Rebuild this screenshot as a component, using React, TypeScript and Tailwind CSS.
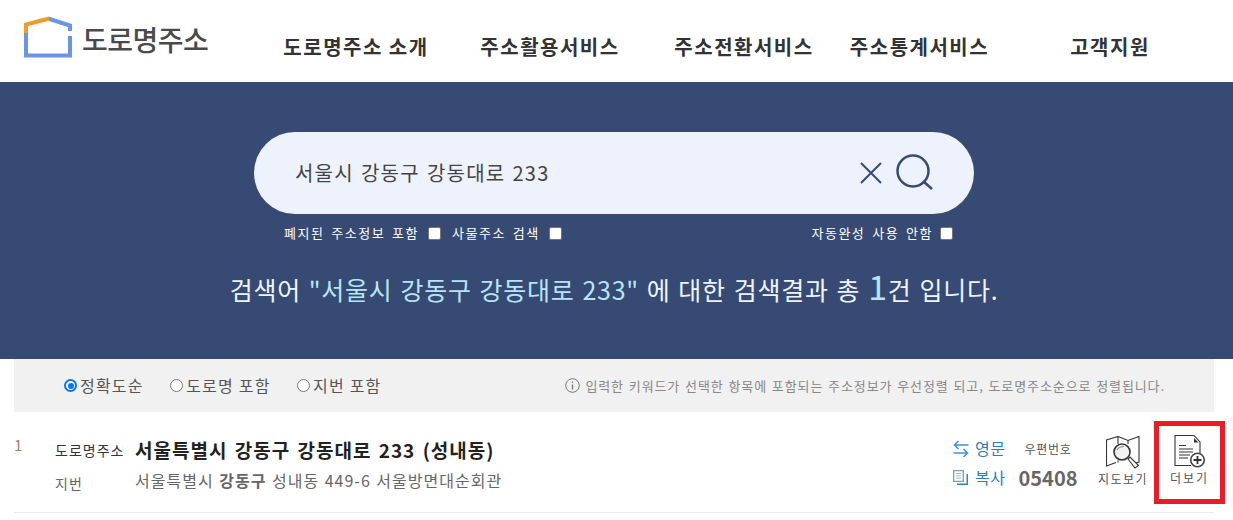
const FONT = "font-['Noto_Sans_CJK_KR','Noto_Sans',sans-serif]";

function Logo() {
  return (
    <svg width="48" height="42" viewBox="0 0 48 42" className="block">
      <path d="M2 17V39.500H46V20M46 15V9.500L24 2.500" fill="none" stroke="#6a94e4" strokeWidth="4" />
      <path d="M2 17V8.500L25 2.500" fill="none" stroke="#f39c25" strokeWidth="4" />
    </svg>
  );
}

function Box() {
  return <span className="inline-block w-[13px] h-[13px] bg-white border border-[#767676] rounded-[2px] shrink-0" />;
}

function Radio({ on, label }: { on?: boolean; label: string }) {
  return (
    <span className="flex items-center">
      <span className={`w-[13px] h-[13px] rounded-full bg-white shrink-0 mt-[2px] ${on ? "border-2 border-[#0075ff] p-[1.500px]" : "border border-[#767676]"}`}>
        {on && <span className="block w-full h-full rounded-full bg-[#0075ff]" />}
      </span>
      <span className="ml-[3px] text-[16px] leading-5 tracking-[1.200px] text-[#555]">{label}</span>
    </span>
  );
}

function MapIcon() {
  return (
    <svg width="34" height="33" viewBox="0 0 34 33" fill="none" stroke="#333" strokeWidth="1.100">
      <path d="M10 26.500L0.500 30V4L12 0.500L22 4.500L33 0.500V26L27 28" />
      <path d="M12 0.500V8M22 4.500V8M12 24.500V26.500" />
      <path d="M22 23L29 32L32.500 29.500L24 21Z" fill="#fff" />
      <circle cx="16" cy="16" r="8" fill="#f2f2f2" strokeWidth="1.600" />
      <path d="M11 14Q13 10.500 18 10.500" stroke="#888" />
    </svg>
  );
}

function DocIcon() {
  return (
    <svg width="32" height="34" viewBox="0 0 32 34" fill="none" stroke="#333" strokeWidth="1.100">
      <path d="M17 30.500H1V0.500H20L26 7V19" />
      <path d="M20 3V7.500H24.500Z" fill="#333" stroke="none" />
      <path d="M5 10.500H12M5 14H19M5 17H19M5 20H16M5 23H14" />
      <circle cx="23.500" cy="25" r="6.800" fill="#fff" strokeWidth="1.600" stroke="#444" />
      <path d="M23.500 21V29M19.500 25H27.500" strokeWidth="1.800" />
    </svg>
  );
}

export default function App() {
  const navItems = [
    ["도로명주소 소개", "w-[194px]"],
    ["주소활용서비스", "w-[194px]"],
    ["주소전환서비스", "w-[194px]"],
    ["주소통계서비스", "w-[157px]"],
    ["고객지원", "w-[224px]"],
  ];
  return (
    <div className={`${FONT} w-[1233px] h-[520px] bg-white overflow-hidden relative`}>
      <header className="h-[82px] flex">
        <div className="w-[259px] pl-[24px] pt-[16px] flex items-start">
          <Logo />
          <span className="ml-[10px] mt-[3px] text-[28px] leading-[40px] font-medium text-[#4a4a4a] tracking-[-0.500px]">도로명주소</span>
        </div>
        <nav className="flex pt-[33px]">
          {navItems.map(([label, w]) => (
            <span key={label} className={`${w} text-center text-[20px] leading-[28px] tracking-[1.500px] font-bold text-[#333]`}>{label}</span>
          ))}
        </nav>
      </header>

      <section className="h-[277px] bg-[#374a74] flex flex-col items-center pt-[50px] pr-[5px]">
        <div className="w-[720px] h-[82px] rounded-[41px] bg-[#edf2fc] flex items-center pl-[41px] pr-[40px]">
          <span className="flex-1 text-[20px] tracking-[1.200px] [word-spacing:1.500px] text-[#444]">서울시 강동구 강동대로 233</span>
          <svg width="24" height="24" viewBox="0 0 24 24" fill="none" stroke="#374a74" strokeWidth="2" className="mr-[13px]">
            <path d="M2 2L22 22M22 2L2 22" />
          </svg>
          <svg width="38" height="38" viewBox="0 0 38 38" fill="none" stroke="#374a74" strokeWidth="2.500">
            <circle cx="17" cy="17" r="15.500" />
            <path d="M27 27L36 35" />
          </svg>
        </div>
        <div className="w-[720px] h-[38px] flex items-center text-[13px] tracking-[1.500px] [word-spacing:2.500px] text-white">
          <span className="ml-[30px] w-[144px]">폐지된 주소정보 포함</span>
          <Box />
          <span className="ml-[11px] w-[97px]">사물주소 검색</span>
          <Box />
          <span className="ml-auto">자동완성 사용 안함</span>
          <span className="ml-[7px] mr-[21px] flex"><Box /></span>
        </div>
        <p className="mt-[16px] text-[25px] leading-[36px] tracking-[0.750px] [word-spacing:1.500px] text-[#eef4ff] flex items-baseline">
          <span>검색어&nbsp;</span>
          <span className="text-[#b5e6f7]">"서울시 강동구 강동대로 233"</span>
          <span>&nbsp;에 대한 검색결과 총&nbsp;</span>
          <span className="text-[34px] leading-[36px] text-[#b5e6f7]">1</span>
          <span>건 입니다.</span>
        </p>
      </section>

      <div className="mx-[14px] w-[1200px] h-[53px] bg-[#f1f1f1] flex items-center pl-[50px] pr-[49px]">
        <div className="flex gap-[26.500px] -mt-[2px]">
          <Radio on label="정확도순" />
          <Radio label="도로명 포함" />
          <Radio label="지번 포함" />
        </div>
        <div className="ml-auto flex items-center text-[13px] tracking-[0.900px] [word-spacing:1px] text-[#888]">
          <svg width="15" height="15" viewBox="0 0 15 15" fill="none" stroke="#777" className="mr-[5px]">
            <circle cx="7.500" cy="7.500" r="6.800" />
            <path d="M7.500 6.500V11.500M7.500 3.500V5" strokeWidth="1.300" />
          </svg>
          입력한 키워드가 선택한 항목에 포함되는 주소정보가 우선정렬 되고, 도로명주소순으로 정렬됩니다.
        </div>
      </div>

      <div className="mx-[14px] w-[1200px] h-[101px] border-b border-[#ececec] flex">
        <span className="w-[41px] pt-[23px] text-[15px] leading-5 text-[#a9805c]">1</span>
        <div className="w-[80px] pt-[28px] text-[14px] tracking-[1px]">
          <div className="leading-5 text-[#333]">도로명주소</div>
          <div className="mt-[13px] leading-5 text-[#666]">지번</div>
        </div>
        <div className="flex-1 pt-[24px]">
          <div className="text-[19px] leading-[28px] tracking-[1px] [word-spacing:2px] font-bold text-[#222]">서울특별시 강동구 강동대로 233 (성내동)</div>
          <div className="mt-[3px] text-[16px] leading-[26px] tracking-[1px] [word-spacing:1px] text-[#666]">
            서울특별시 <span className="font-bold">강동구</span> 성내동 449-6 서울방면대순회관
          </div>
        </div>
        <div className="w-[65px] pt-[23px] text-[#2a7cc7] text-[16px] tracking-[0.600px]">
          <div className="flex items-center gap-[6px] h-[26px]">
            <svg width="16" height="17" viewBox="0 0 16 17" fill="none" stroke="#3f94d6" strokeWidth="1.600">
              <path d="M15.500 5H1.500M5.500 1L1.500 5L5.500 9M0.500 13H14.500M10.500 9L14.500 13L10.500 17" />
            </svg>
            영문
          </div>
          <div className="flex items-center gap-[7px] h-[26px] mt-[3px]">
            <svg width="15" height="15" viewBox="0 0 15 15" fill="none" stroke="#2a86d0" strokeWidth="1.300">
              <path d="M0.700 0.700H10.300V11.300H0.700Z" stroke="#5fa6dd" />
              <path d="M4 14.300H14.300V4" strokeWidth="1.600" />
              <path d="M3 3.500H8M3 5.800H8M3 8.100H8" strokeWidth="0.900" stroke="#aaa" />
            </svg>
            복사
          </div>
        </div>
        <div className="w-[60px] pt-[24px] text-center">
          <div className="text-[12px] leading-[26px] tracking-[0.700px] text-[#555]">우편번호</div>
          <div className="mt-[3px] text-[20px] leading-[26px] font-bold text-[#666]">05408</div>
        </div>
        <div className="w-[90px] pt-[24px] flex flex-col items-center">
          <MapIcon />
          <span className="text-[12px] leading-5 tracking-[1.500px] text-[#555]">지도보기</span>
        </div>
        <div className="w-[46px] pt-[23px] pl-[6px] flex flex-col items-start">
          <DocIcon />
          <span className="-ml-[4px] text-[12px] leading-5 tracking-[2px] text-[#555] -mt-[1px]">더보기</span>
        </div>
      </div>

      <div className="absolute left-[1154px] top-[421px] w-[71px] h-[83px] border-[5px] border-[#ed1c24]" />
    </div>
  );
}
